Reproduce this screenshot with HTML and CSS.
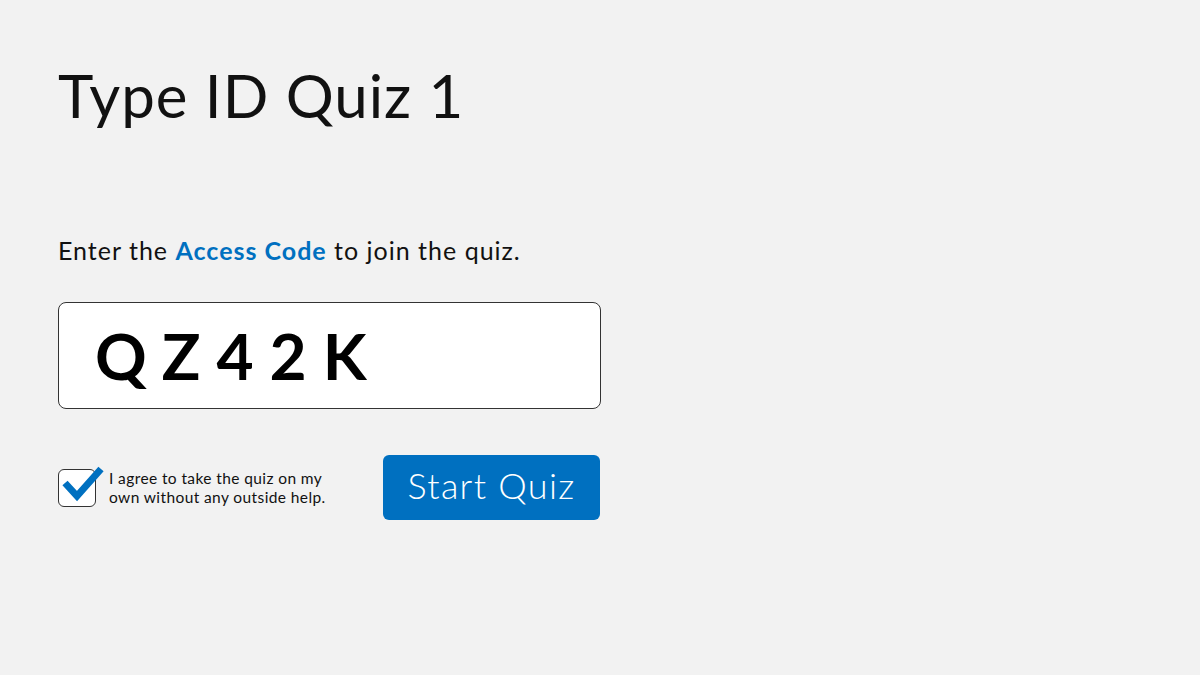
FILE: index.html
```html
<!DOCTYPE html>
<html>
<head>
<meta charset="utf-8">
<link rel="stylesheet" href="styles.css">
</head>
<body>
<main class="page">
  <h1 class="title">Type ID Quiz 1</h1>
  <p class="prompt">Enter the <strong class="accent">Access Code</strong> to join the quiz.</p>
  <div class="code-box"><span class="code">QZ42K</span></div>
  <div class="actions">
    <label class="agree">
      <span class="checkbox">
        <svg class="check" viewBox="0 0 48 40" width="48" height="40">
          <path d="M5 18 L17 31 L41 4" fill="none" stroke="#0070c0" stroke-width="7" stroke-linecap="butt" stroke-linejoin="miter"/>
        </svg>
      </span>
      <span class="agree-text">I agree to take the quiz on my<br>own without any outside help.</span>
    </label>
    <button class="start">Start Quiz</button>
  </div>
</main>
</body>
</html>
```
FILE: styles.css
```css
html, body {
  margin: 0;
  padding: 0;
  background: #f2f2f2;
  width: 1200px;
  height: 675px;
  overflow: hidden;
}
.page {
  font-family: "Lato", "Noto Sans", sans-serif;
  color: #111;
  padding: 57px 0 0 58px;
  display: flex;
  flex-direction: column;
  align-items: flex-start;
}
.title {
  margin: 0;
  font-weight: 400;
  font-size: 60px;
  line-height: 76px;
  letter-spacing: 1px;
}
.prompt {
  margin: 102px 0 0 0;
  font-size: 25px;
  line-height: 30px;
  letter-spacing: 1px;
}
.accent {
  color: #0070c0;
  font-weight: 700;
}
.code-box {
  margin-top: 37px;
  width: 543px;
  height: 107px;
  background: #fff;
  border: 1px solid #333;
  border-radius: 8px;
  display: flex;
  align-items: center;
  padding-left: 36px;
  box-sizing: border-box;
}
.code {
  font-family: "Lato", "Liberation Sans", sans-serif;
  font-weight: 700;
  font-size: 64px;
  line-height: 1;
  letter-spacing: 16px;
  color: #000;
}
.actions {
  margin-top: 46px;
  width: 542px;
  display: flex;
  align-items: center;
  justify-content: space-between;
}
.agree {
  display: flex;
  align-items: center;
  gap: 13px;
}
.checkbox {
  position: relative;
  width: 36px;
  height: 36px;
  background: #fff;
  border: 1px solid #333;
  border-radius: 6px;
}
.check {
  position: absolute;
  left: 1px;
  top: -5px;
}
.agree-text {
  font-size: 15.5px;
  line-height: 19px;
  letter-spacing: 0.4px;
}
.start {
  width: 217px;
  height: 65px;
  background: #0070c0;
  color: #fff;
  border: none;
  border-radius: 6px;
  font-family: "Lato", "Noto Sans", sans-serif;
  font-weight: 300;
  font-size: 36px;
  letter-spacing: 1.3px;
  padding: 0 0 6px 0;
}
```
